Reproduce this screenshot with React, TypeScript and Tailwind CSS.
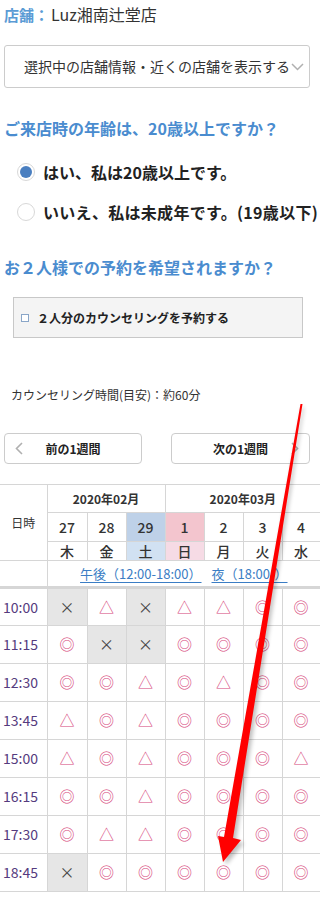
import React from 'react';

type Mark = 'o' | 't' | 'x';

const days = [
  { d: '27', w: '木', tone: '' },
  { d: '28', w: '金', tone: '' },
  { d: '29', w: '土', tone: 'sat' },
  { d: '1', w: '日', tone: 'sun' },
  { d: '2', w: '月', tone: '' },
  { d: '3', w: '火', tone: '' },
  { d: '4', w: '水', tone: '' },
];

const rows: { time: string; marks: Mark[] }[] = [
  { time: '10:00', marks: ['x', 't', 'x', 't', 't', 'o', 'o'] },
  { time: '11:15', marks: ['o', 'x', 'x', 'o', 'o', 'o', 'o'] },
  { time: '12:30', marks: ['o', 'o', 't', 'o', 't', 'o', 'o'] },
  { time: '13:45', marks: ['t', 'o', 't', 'o', 'o', 'o', 'o'] },
  { time: '15:00', marks: ['t', 'o', 't', 'o', 'o', 'o', 't'] },
  { time: '16:15', marks: ['o', 'o', 't', 'o', 'o', 'o', 'o'] },
  { time: '17:30', marks: ['o', 't', 't', 'o', 'o', 'o', 'o'] },
  { time: '18:45', marks: ['x', 'o', 'o', 'o', 'o', 'o', 'o'] },
];

const Chevron = ({ dir }: { dir: 'left' | 'right' | 'down' }) => {
  if (dir === 'down') {
    return (
      <svg width="13" height="8" viewBox="0 0 13 8" className="shrink-0">
        <path d="M1 1l5.5 5.5L12 1" fill="none" stroke="#b0b0b0" strokeWidth="1.5" />
      </svg>
    );
  }
  return (
    <svg width="8" height="13" viewBox="0 0 8 13" className="shrink-0">
      <path
        d={dir === 'left' ? 'M7 1L1.5 6.5 7 12' : 'M1 1l5.5 5.5L1 12'}
        fill="none"
        stroke="#b0b0b0"
        strokeWidth="1.6"
      />
    </svg>
  );
};

const Cell = ({ m }: { m: Mark }) => {
  if (m === 'x') {
    return (
      <td className="border border-[#d6d6d6] bg-[#e6e6e6] text-center text-[15px] text-[#444]">×</td>
    );
  }
  return (
    <td className="border border-[#d6d6d6] text-center text-[15px] text-[#d6457a]">
      {m === 'o' ? '◎' : '△'}
    </td>
  );
};

export default function App() {
  return (
    <div className="relative w-[320px] h-[898px] overflow-hidden bg-white text-[#333] font-['Noto_Sans_CJK_JP',sans-serif]">
      {/* 店舗 */}
      <div className="pl-[4px] h-[28px] leading-[28px] whitespace-nowrap">
        <span className="text-[15px] font-bold text-[#5b9bd5]">店舗：</span>
        <span className="ml-[2px] text-[16px] text-[#333]">Luz湘南辻堂店</span>
      </div>

      <div className="mt-[17px] ml-[4px] w-[306px] h-[43px] border border-[#cccccc] rounded-[3px] flex items-center pl-[19px] gap-[1px]">
        <span className="text-[14px] whitespace-nowrap">選択中の店舗情報・近くの店舗を表示する</span>
        <Chevron dir="down" />
      </div>

      {/* 年齢 */}
      <div className="mt-[28px] pl-[4px] h-[24px] leading-[24px] text-[16px] font-bold text-[#4a8ccf] whitespace-nowrap">
        ご来店時の年齢は、20歳以上ですか？
      </div>
      <div className="mt-[20px] pl-[17px] h-[24px] flex items-center gap-[8px] whitespace-nowrap">
        <span className="w-[18px] h-[18px] rounded-full border border-[#d8d8d8] bg-white flex items-center justify-center shrink-0">
          <span className="w-[12px] h-[12px] rounded-full bg-[#4a7fc0]" />
        </span>
        <span className="text-[16px] font-bold text-[#222]">はい、私は20歳以上です。</span>
      </div>
      <div className="mt-[16px] pl-[17px] h-[24px] flex items-center gap-[8px] whitespace-nowrap">
        <span className="w-[18px] h-[18px] rounded-full border border-[#d8d8d8] bg-white shrink-0" />
        <span className="text-[16px] font-bold text-[#222] tracking-[0.3px]">いいえ、私は未成年です。(19歳以下)</span>
      </div>

      {/* 2人 */}
      <div className="mt-[31px] pl-[4px] h-[24px] leading-[24px] text-[16px] font-bold text-[#4a8ccf] whitespace-nowrap">
        お２人様での予約を希望されますか？
      </div>
      <div className="mt-[18px] ml-[13px] w-[290px] h-[41px] border border-[#c8c8c8] bg-[#f4f4f4] flex items-center pl-[7px] gap-[8px]">
        <span className="w-[8px] h-[8px] border border-[#8aa6c8] bg-white shrink-0" />
        <span className="text-[12px] font-bold text-[#222] whitespace-nowrap">２人分のカウンセリングを予約する</span>
      </div>

      <div className="mt-[47px] pl-[11px] h-[20px] leading-[20px] text-[12px] text-[#333] whitespace-nowrap">
        カウンセリング時間(目安)：約60分
      </div>

      {/* week nav */}
      <div className="mt-[28px] flex">
        <div className="ml-[4px] w-[138px] h-[31px] border border-[#cccccc] rounded-[4px] flex items-center pl-[10px]">
          <Chevron dir="left" />
          <span className="flex-1 text-center pr-[18px] text-[12px] font-bold text-[#222]">前の1週間</span>
        </div>
        <div className="ml-[29px] w-[139px] h-[31px] border border-[#cccccc] rounded-[4px] flex items-center pr-[10px]">
          <span className="flex-1 text-center pl-[18px] text-[12px] font-bold text-[#222]">次の1週間</span>
          <Chevron dir="right" />
        </div>
      </div>

      {/* schedule table */}
      <table className="mt-[20px] w-[320px] table-fixed border-collapse">
        <colgroup>
          <col className="w-[47px]" />
          <col className="w-[40px]" />
          <col className="w-[39px]" />
          <col className="w-[39px]" />
          <col className="w-[39px]" />
          <col className="w-[39px]" />
          <col className="w-[39px]" />
          <col className="w-[38px]" />
        </colgroup>
        <thead>
          <tr className="h-[28px]">
            <td rowSpan={3} className="border border-l-0 border-[#d6d6d6] text-center text-[12px] text-[#333]">
              日時
            </td>
            <td colSpan={3} className="border border-[#d6d6d6] text-center text-[12px] font-bold text-[#333]">
              2020年02月
            </td>
            <td colSpan={4} className="border border-r-0 border-[#d6d6d6] text-center text-[12px] font-bold text-[#333]">
              2020年03月
            </td>
          </tr>
          <tr className="h-[29px]">
            {days.map((d) => (
              <td
                key={d.d}
                className={`border border-[#d6d6d6] text-center text-[14px] font-medium text-[#333] ${
                  d.tone === 'sat' ? 'bg-[#bed1e8]' : d.tone === 'sun' ? 'bg-[#f3c5ce]' : ''
                }`}
              >
                {d.d}
              </td>
            ))}
          </tr>
          <tr className="h-[19px]">
            {days.map((d) => (
              <td
                key={d.w}
                className={`border border-[#d6d6d6] text-center text-[14px] leading-[17px] font-medium text-[#333] ${
                  d.tone === 'sat' ? 'bg-[#d1e1f2]' : d.tone === 'sun' ? 'bg-[#f6dbe5]' : ''
                }`}
              >
                {d.w}
              </td>
            ))}
          </tr>
          <tr className="h-[27px]">
            <td className="border border-l-0 border-b-[3px] border-[#d6d6d6]" />
            <td colSpan={7} className="border border-r-0 border-b-[3px] border-[#d6d6d6] text-center text-[13px] whitespace-nowrap">
              <span className="text-[#3b7dc4] underline underline-offset-[3px]">午後（12:00-18:00）</span>
              <span className="ml-[10px] text-[#3b7dc4] underline underline-offset-[3px]">夜（18:00-）</span>
            </td>
          </tr>
        </thead>
        <tbody>
          {rows.map((r) => (
            <tr key={r.time} className="h-[38px]">
              <td className="border border-l-0 border-[#d6d6d6] pl-[3px] text-left text-[14px] text-[#553b7e]">
                {r.time}
              </td>
              {r.marks.map((m, i) => (
                <Cell key={i} m={m} />
              ))}
            </tr>
          ))}
        </tbody>
      </table>

      {/* annotation arrow */}
      <svg
        className="absolute top-0 left-0 pointer-events-none"
        width="320"
        height="898"
        viewBox="0 0 320 898"
      >
        <defs>
          <filter id="arrowShadow" x="-20%" y="-5%" width="140%" height="110%">
            <feGaussianBlur stdDeviation="2" />
          </filter>
        </defs>
        <polygon
          points="302,407 304,407 236,841 244,843 226,865 221,838 227,839"
          fill="#000"
          opacity="0.25"
          filter="url(#arrowShadow)"
        />
        <polygon
          points="300.5,404 302.5,404 233,838 241,840 223,862 218,836 224,837"
          fill="#ff0000"
        />
      </svg>
    </div>
  );
}
